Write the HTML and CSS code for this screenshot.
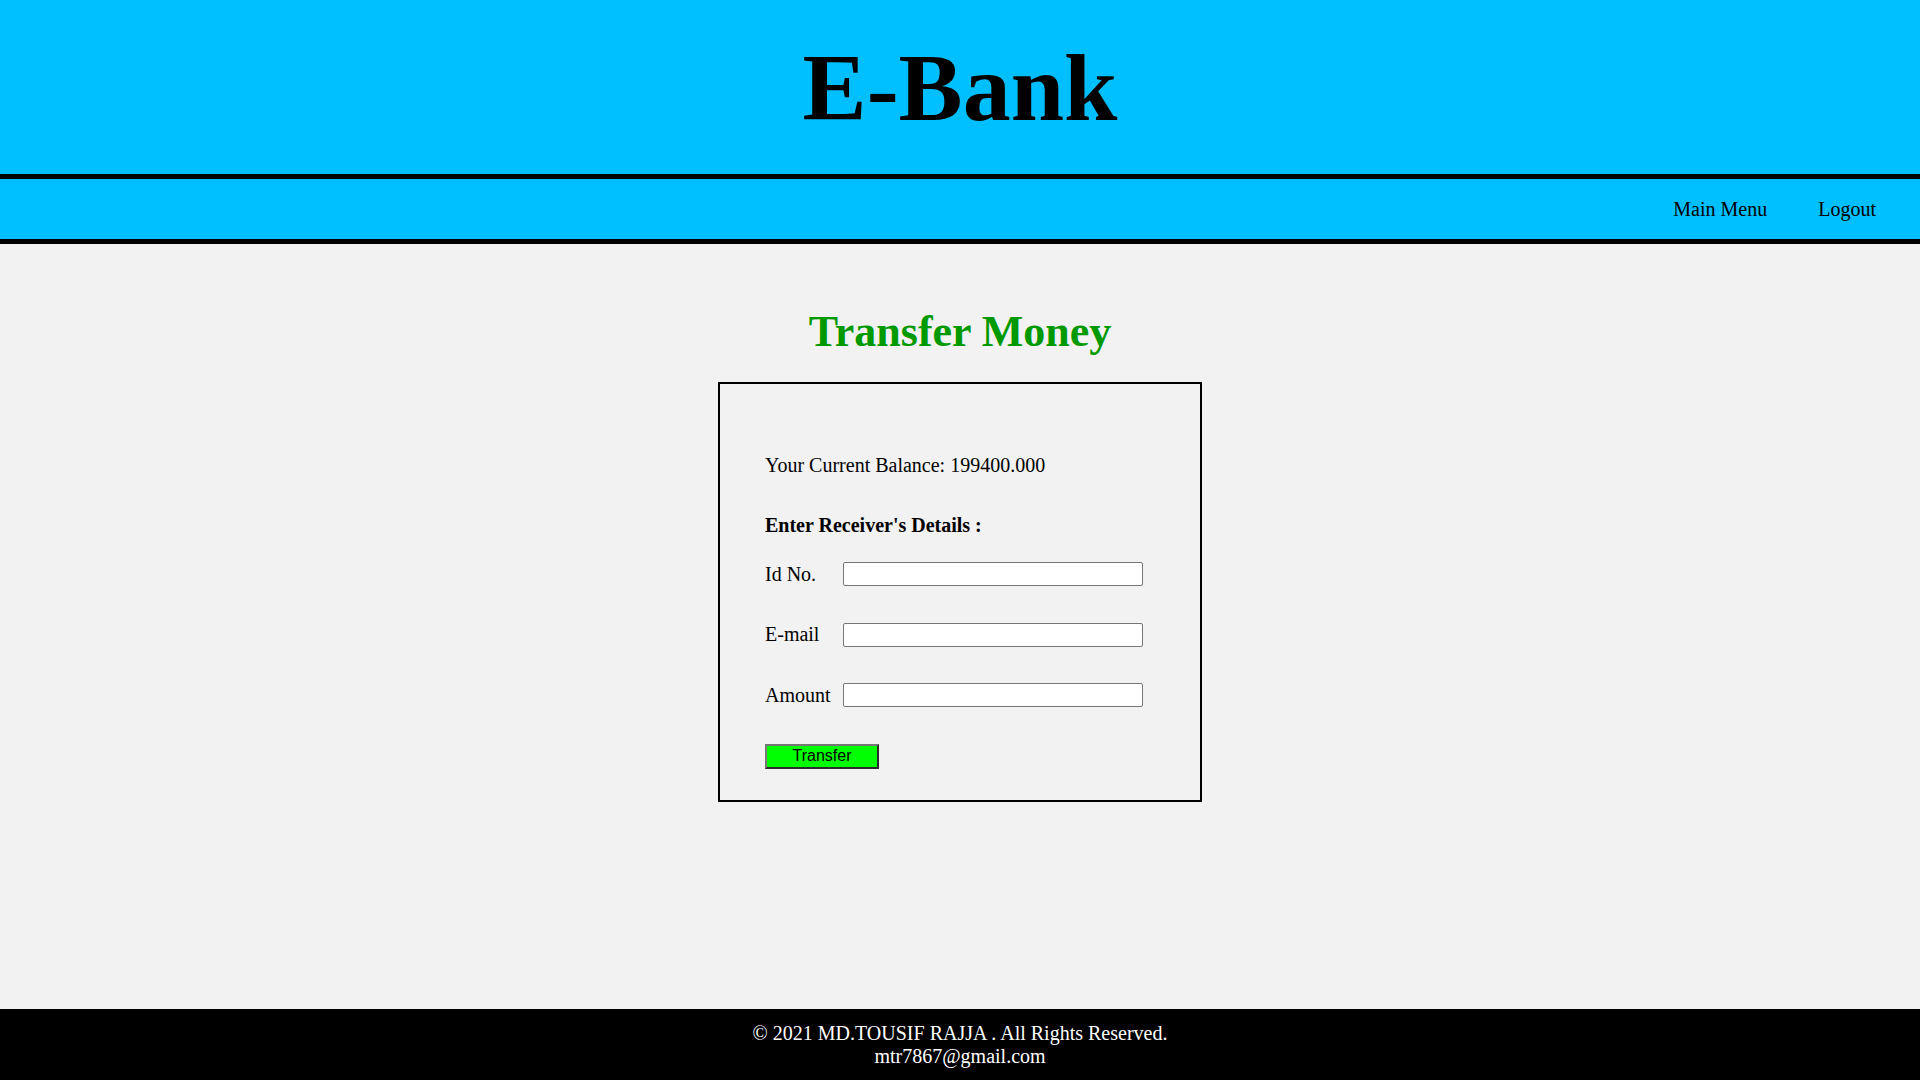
FILE: index.html
```html
<!DOCTYPE html>
<html lang="en">
<head>
<meta charset="utf-8">
<title>E-Bank | Transfer Money</title>
<link rel="stylesheet" href="styles.css">
</head>
<body>
<div class="page">
  <header class="masthead">
    <h1 class="brand">E-Bank</h1>
  </header>
  <nav class="navbar">
    <a class="nav-link" href="#">Main Menu</a>
    <a class="nav-link" href="#">Logout</a>
  </nav>
  <main class="main">
    <h2 class="page-title">Transfer Money</h2>
    <form class="transfer-box">
      <p class="balance">Your Current Balance: 199400.000</p>
      <p class="section-label">Enter Receiver's Details :</p>
      <div class="field-row">
        <label class="field-label" for="idno">Id No.</label>
        <input class="field-input" type="text" id="idno">
      </div>
      <div class="field-row">
        <label class="field-label" for="email">E-mail</label>
        <input class="field-input" type="text" id="email">
      </div>
      <div class="field-row">
        <label class="field-label" for="amount">Amount</label>
        <input class="field-input" type="text" id="amount">
      </div>
      <button class="transfer-btn" type="button">Transfer</button>
    </form>
  </main>
  <footer class="footer">
    <div class="footer-line">© 2021 MD.TOUSIF RAJJA . All Rights Reserved.</div>
    <div class="footer-line">mtr7867@gmail.com</div>
  </footer>
</div>
</body>
</html>
```
FILE: styles.css
```css
* {
  box-sizing: border-box;
}

html, body {
  margin: 0;
  padding: 0;
}

body {
  background: #f2f2f2;
  font-family: "Liberation Serif", "Times New Roman", serif;
  font-size: 20px;
  line-height: normal;
  color: #000;
}

.page {
  min-height: 100vh;
  display: flex;
  flex-direction: column;
}

.masthead {
  background: #00bfff;
  height: 179px;
  border-bottom: 5px solid #000;
  display: flex;
  align-items: center;
  justify-content: center;
}

.brand {
  margin: 0;
  font-size: 96px;
  font-weight: bold;
  line-height: normal;
}

.navbar {
  background: #00bfff;
  height: 65px;
  border-bottom: 5px solid #000;
  display: flex;
  align-items: center;
  justify-content: flex-end;
  gap: 51px;
  padding-right: 44px;
}

.nav-link {
  color: #000;
  text-decoration: none;
  font-size: 20px;
}

.main {
  flex: 1;
  display: flex;
  flex-direction: column;
  align-items: center;
  padding-top: 62px;
}

.page-title {
  margin: 0 0 25px 0;
  font-size: 44px;
  font-weight: bold;
  color: #009900;
  line-height: normal;
}

.transfer-box {
  width: 484px;
  border: 2px solid #000;
  padding: 70px 45px 31px 45px;
  display: flex;
  flex-direction: column;
  align-items: flex-start;
}

.balance {
  margin: 0 0 37px 0;
}

.section-label {
  margin: 0 0 25px 0;
  font-weight: bold;
}

.field-row {
  display: flex;
  align-items: center;
  height: 24px;
  margin-bottom: 36.5px;
}

.field-label {
  width: 78px;
}

.field-input {
  width: 300px;
  height: 24px;
  border: 1px solid #767676;
  border-radius: 2px;
  background: #fff;
  padding: 1px 2px;
  font-family: "Liberation Sans", Arial, sans-serif;
  font-size: 13px;
}

.transfer-btn {
  width: 114px;
  height: 25px;
  background: #00ff00;
  border-style: solid;
  border-width: 2px;
  border-color: #767676 #2b2b2b #2b2b2b #767676;
  font-family: "Liberation Sans", Arial, sans-serif;
  font-size: 16px;
  color: #000;
  padding: 0;
  line-height: 1;
}

.footer {
  background: #000;
  color: #fff;
  text-align: center;
  padding: 12.5px 0;
}

.footer-line {
  line-height: 23px;
}
```
